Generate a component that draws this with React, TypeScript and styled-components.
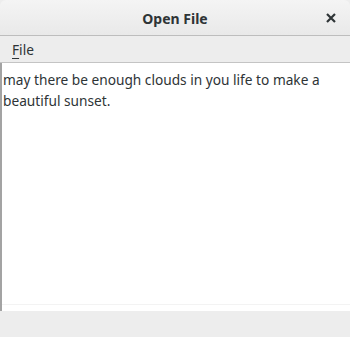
import React from "react";
import styled, { createGlobalStyle } from "styled-components";

const Global = createGlobalStyle`
  html, body { margin: 0; padding: 0; background: #ffffff; }
  body { font-family: "Noto Sans", "Open Sans", sans-serif; }
`;

const Window = styled.div`
  width: 350px;
  height: 337px;
  display: flex;
  flex-direction: column;
  background: #ededed;
  overflow: hidden;
`;

const TitleBar = styled.div`
  height: 35px;
  flex: none;
  display: grid;
  grid-template-columns: 1fr auto 1fr;
  align-items: center;
  background: linear-gradient(#f4f4f4, #e9e9e9);
  border-bottom: 1px solid #bdbdbd;
  border-radius: 6px 6px 0 0;
  color: #2e3436;
`;

const Title = styled.div`
  grid-column: 2;
  font-weight: bold;
  font-size: 14px;
  padding-top: 1px;
`;

const Close = styled.div`
  grid-column: 3;
  justify-self: end;
  margin-right: 14px;
  display: flex;
  align-items: center;
`;

const MenuBar = styled.div`
  height: 27px;
  flex: none;
  display: flex;
  align-items: center;
  padding-left: 12px;
  background: #ededed;
  border-bottom: 1px solid #c4c4c4;
  box-sizing: border-box;
`;

const MenuItem = styled.span`
  font-size: 13.7px;
  color: #2e3436;
  u { text-decoration-thickness: 1px; text-underline-offset: 3px; }
`;

const TextArea = styled.div`
  flex: none;
  height: 248px;
  background: linear-gradient(
    to bottom,
    #ffffff 0,
    #ffffff 241px,
    #f3f3f3 241px,
    #f3f3f3 242px,
    #ffffff 242px
  );
  border-left: 2px solid #a3a3a3;
  padding: 6px 6px 0 1px;
  box-sizing: border-box;
  font-size: 13.7px;
  line-height: 21px;
  color: #2e3436;
`;

const Footer = styled.div`
  flex: 1;
  background: #ededed;
`;

export default function App() {
  return (
    <>
      <Global />
      <Window>
        <TitleBar>
          <Title>Open File</Title>
          <Close>
            <svg width="10" height="10" viewBox="0 0 10 10">
              <path d="M1 1L9 9M9 1L1 9" stroke="#2e3436" strokeWidth="2.2" />
            </svg>
          </Close>
        </TitleBar>
        <MenuBar>
          <MenuItem>
            <u>F</u>ile
          </MenuItem>
        </MenuBar>
        <TextArea>
          may there be enough clouds in you life to make a beautiful sunset.
        </TextArea>
        <Footer />
      </Window>
    </>
  );
}
